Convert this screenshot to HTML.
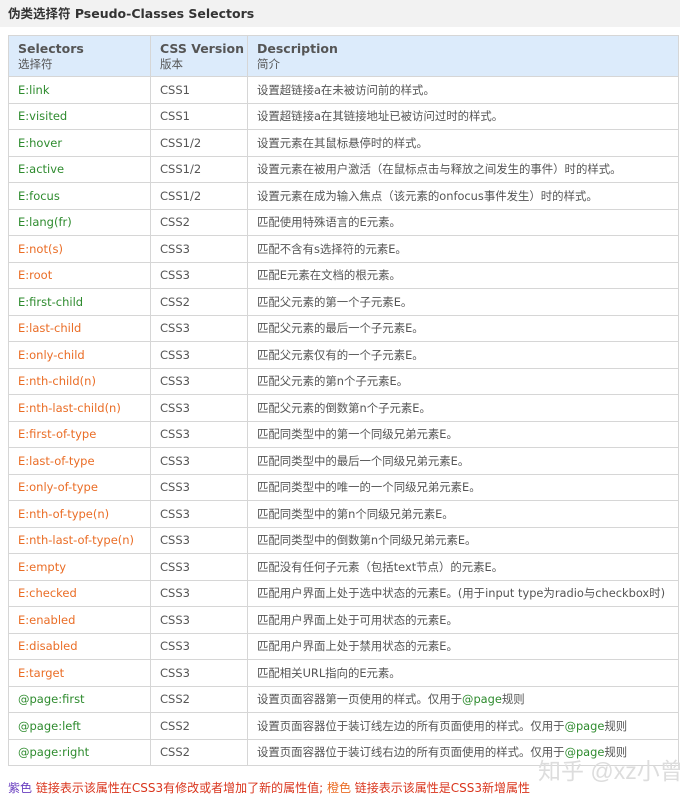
<!DOCTYPE html>
<html><head><meta charset="utf-8"><style>
body{margin:0;width:680px;height:800px;background:#fff;font-family:"DejaVu Sans","Noto Sans CJK SC",sans-serif;overflow:hidden;position:relative}
.t{position:absolute;left:0;top:0;width:680px;height:27px;background:#f2f2f2;font-size:12.5px;font-weight:bold;color:#333;line-height:27px;padding-left:8px;box-sizing:border-box}
table{position:absolute;left:8px;top:35px;width:671px;border-collapse:collapse;font-size:11.5px;color:#555}
td,th{border:1px solid #d6d6d6;padding:0 0 0 9px;height:25.5px;text-align:left;white-space:nowrap}
th{background:#dcebfb;font-weight:bold;color:#555;height:40px;font-size:12.5px;line-height:15px}
th span{font-weight:normal;font-size:11.5px}
td:nth-child(3){font-size:11.4px}
.g{color:#2e8b2e}.o{color:#ea6d26}
.f{position:absolute;left:8px;top:779px;font-size:12px;color:#d9341c;white-space:nowrap}
.w{position:absolute;left:538px;top:752px;font-size:23px;color:#ddd;white-space:nowrap;font-family:"Liberation Sans","Noto Sans CJK SC",sans-serif}
</style></head><body>
<div class="t">伪类选择符 Pseudo-Classes Selectors</div>
<table>
<colgroup><col style="width:142px"><col style="width:97px"><col></colgroup>
<tr><th>Selectors<br><span>选择符</span></th><th>CSS Version<br><span>版本</span></th><th>Description<br><span>简介</span></th></tr>
<tr><td class="g">E:link</td><td>CSS1</td><td>设置超链接a在未被访问前的样式。</td></tr>
<tr><td class="g">E:visited</td><td>CSS1</td><td>设置超链接a在其链接地址已被访问过时的样式。</td></tr>
<tr><td class="g">E:hover</td><td>CSS1/2</td><td>设置元素在其鼠标悬停时的样式。</td></tr>
<tr><td class="g">E:active</td><td>CSS1/2</td><td>设置元素在被用户激活（在鼠标点击与释放之间发生的事件）时的样式。</td></tr>
<tr><td class="g">E:focus</td><td>CSS1/2</td><td>设置元素在成为输入焦点（该元素的onfocus事件发生）时的样式。</td></tr>
<tr><td class="g">E:lang(fr)</td><td>CSS2</td><td>匹配使用特殊语言的E元素。</td></tr>
<tr><td class="o">E:not(s)</td><td>CSS3</td><td>匹配不含有s选择符的元素E。</td></tr>
<tr><td class="o">E:root</td><td>CSS3</td><td>匹配E元素在文档的根元素。</td></tr>
<tr><td class="g">E:first-child</td><td>CSS2</td><td>匹配父元素的第一个子元素E。</td></tr>
<tr><td class="o">E:last-child</td><td>CSS3</td><td>匹配父元素的最后一个子元素E。</td></tr>
<tr><td class="o">E:only-child</td><td>CSS3</td><td>匹配父元素仅有的一个子元素E。</td></tr>
<tr><td class="o">E:nth-child(n)</td><td>CSS3</td><td>匹配父元素的第n个子元素E。</td></tr>
<tr><td class="o">E:nth-last-child(n)</td><td>CSS3</td><td>匹配父元素的倒数第n个子元素E。</td></tr>
<tr><td class="o">E:first-of-type</td><td>CSS3</td><td>匹配同类型中的第一个同级兄弟元素E。</td></tr>
<tr><td class="o">E:last-of-type</td><td>CSS3</td><td>匹配同类型中的最后一个同级兄弟元素E。</td></tr>
<tr><td class="o">E:only-of-type</td><td>CSS3</td><td>匹配同类型中的唯一的一个同级兄弟元素E。</td></tr>
<tr><td class="o">E:nth-of-type(n)</td><td>CSS3</td><td>匹配同类型中的第n个同级兄弟元素E。</td></tr>
<tr><td class="o">E:nth-last-of-type(n)</td><td>CSS3</td><td>匹配同类型中的倒数第n个同级兄弟元素E。</td></tr>
<tr><td class="o">E:empty</td><td>CSS3</td><td>匹配没有任何子元素（包括text节点）的元素E。</td></tr>
<tr><td class="o">E:checked</td><td>CSS3</td><td>匹配用户界面上处于选中状态的元素E。(用于input type为radio与checkbox时)</td></tr>
<tr><td class="o">E:enabled</td><td>CSS3</td><td>匹配用户界面上处于可用状态的元素E。</td></tr>
<tr><td class="o">E:disabled</td><td>CSS3</td><td>匹配用户界面上处于禁用状态的元素E。</td></tr>
<tr><td class="o">E:target</td><td>CSS3</td><td>匹配相关URL指向的E元素。</td></tr>
<tr><td class="g">@page:first</td><td>CSS2</td><td>设置页面容器第一页使用的样式。仅用于<span class="g">@page</span>规则</td></tr>
<tr><td class="g">@page:left</td><td>CSS2</td><td>设置页面容器位于装订线左边的所有页面使用的样式。仅用于<span class="g">@page</span>规则</td></tr>
<tr><td class="g">@page:right</td><td>CSS2</td><td>设置页面容器位于装订线右边的所有页面使用的样式。仅用于<span class="g">@page</span>规则</td></tr>
</table>
<div class="w">知乎 @xz小曾</div>
<div class="f"><span style="color:#6a3fc0">紫色</span> 链接表示该属性在CSS3有修改或者增加了新的属性值; <span style="color:#ea6d26">橙色</span> 链接表示该属性是CSS3新增属性</div>
</body></html>
